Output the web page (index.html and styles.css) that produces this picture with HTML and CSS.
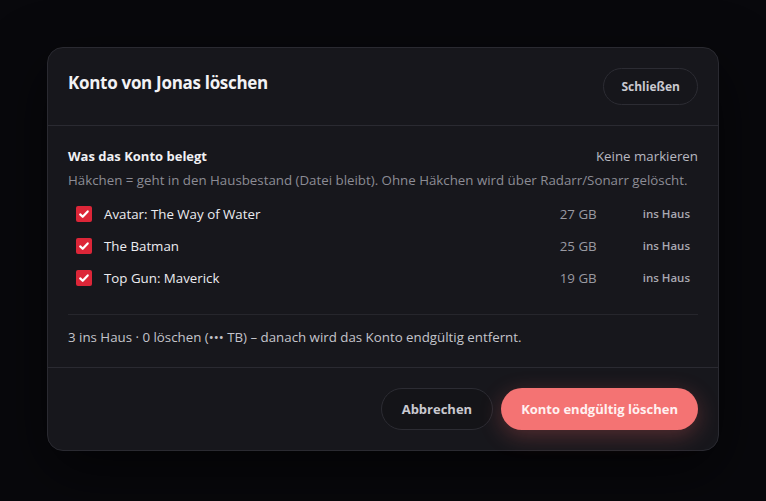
FILE: index.html
```html
<!DOCTYPE html>
<html lang="de">
<head>
<meta charset="utf-8">
<title>Konto löschen</title>
<link rel="stylesheet" href="styles.css">
</head>
<body>
<div class="backdrop">
  <div class="modal">
    <div class="modal-header">
      <h2 class="modal-title">Konto von Jonas löschen</h2>
      <button class="btn btn-ghost btn-sm">Schließen</button>
    </div>
    <div class="modal-body">
      <div class="section-head">
        <span class="section-title">Was das Konto belegt</span>
        <span class="link">Keine markieren</span>
      </div>
      <p class="hint">Häkchen = geht in den Hausbestand (Datei bleibt). Ohne Häkchen wird über Radarr/Sonarr gelöscht.</p>
      <ul class="items">
        <li class="item">
          <span class="check"><svg viewBox="0 0 16 16" width="16" height="16"><path d="M4.2 8.4l2.5 2.4 5-5.4" fill="none" stroke="#fff" stroke-width="2.2" stroke-linecap="round" stroke-linejoin="round"/></svg></span>
          <span class="item-name">Avatar: The Way of Water</span>
          <span class="item-size">27 GB</span>
          <span class="item-status">ins Haus</span>
        </li>
        <li class="item">
          <span class="check"><svg viewBox="0 0 16 16" width="16" height="16"><path d="M4.2 8.4l2.5 2.4 5-5.4" fill="none" stroke="#fff" stroke-width="2.2" stroke-linecap="round" stroke-linejoin="round"/></svg></span>
          <span class="item-name">The Batman</span>
          <span class="item-size">25 GB</span>
          <span class="item-status">ins Haus</span>
        </li>
        <li class="item">
          <span class="check"><svg viewBox="0 0 16 16" width="16" height="16"><path d="M4.2 8.4l2.5 2.4 5-5.4" fill="none" stroke="#fff" stroke-width="2.2" stroke-linecap="round" stroke-linejoin="round"/></svg></span>
          <span class="item-name">Top Gun: Maverick</span>
          <span class="item-size">19 GB</span>
          <span class="item-status">ins Haus</span>
        </li>
      </ul>
      <div class="summary">3 ins Haus · 0 löschen (••• TB) – danach wird das Konto endgültig entfernt.</div>
    </div>
    <div class="modal-footer">
      <button class="btn btn-ghost">Abbrechen</button>
      <button class="btn btn-danger">Konto endgültig löschen</button>
    </div>
  </div>
</div>
</body>
</html>
```
FILE: styles.css
```css
* { box-sizing: border-box; }
html, body { margin: 0; padding: 0; }
body {
  background: #08080c;
  font-family: "Open Sans", "Noto Sans", sans-serif;
  color: #e6e6ea;
}
.backdrop {
  min-height: 501px;
  display: flex;
  align-items: center;
  justify-content: center;
  padding-bottom: 4px;
}
.modal {
  width: 672px;
  background: #17171c;
  border: 1px solid #2a2a31;
  border-radius: 16px;
  box-shadow: 0 20px 60px rgba(0,0,0,0.6);
}
.modal-header {
  display: flex;
  justify-content: space-between;
  align-items: flex-start;
  padding: 20px 20px 20px 20px;
  border-bottom: 1px solid #2a2a31;
}
.modal-title {
  margin: 3px 0 0;
  font-size: 17px;
  font-weight: 700;
  line-height: 24px;
  color: #f2f2f5;
  letter-spacing: -0.3px;
}
.btn {
  font-family: inherit;
  font-weight: 700;
  font-size: 13px;
  border-radius: 999px;
  cursor: pointer;
  display: inline-flex;
  align-items: center;
  justify-content: center;
}
.btn-ghost {
  background: #141418;
  border: 1px solid #2c2c33;
  color: #c9c9d0;
  height: 42px;
  padding: 0 20px;
}
.btn-sm {
  height: 37px;
  font-size: 12px;
  padding: 0 17px;
  background: #16161b;
}
.btn-danger {
  background: #f47373;
  border: none;
  color: #fff1f1;
  height: 42px;
  padding: 0 20px;
  box-shadow: 0 6px 22px rgba(244,100,100,0.28);
}
.modal-body {
  padding: 20px 20px 20px;
  border-bottom: 1px solid #2a2a31;
}
.section-head {
  display: flex;
  justify-content: space-between;
  align-items: center;
  line-height: 20px;
}
.section-title {
  font-size: 13px;
  font-weight: 700;
  color: #f0f0f3;
}
.link {
  font-size: 13.3px;
  color: #b8b8c0;
}
.hint {
  margin: 4px 0 0;
  font-size: 13.3px;
  line-height: 20px;
  color: #8c8c95;
}
.items {
  list-style: none;
  margin: 8px 0 0;
  padding: 0;
}
.item {
  display: flex;
  align-items: center;
  height: 32px;
  padding: 0 8px;
}
.check {
  width: 16px;
  height: 16px;
  border-radius: 2px;
  background: #dc2638;
  display: flex;
  margin-right: 12px;
}
.item-name {
  flex: 1;
  font-size: 13.3px;
  color: #ececf0;
}
.item-size {
  font-size: 13.3px;
  color: #9a9aa2;
}
.item-status {
  margin-left: 46px;
  font-size: 11.5px;
  font-weight: 600;
  color: #a9a9b1;
}
.summary {
  margin-top: 20px;
  padding-top: 12px;
  border-top: 1px solid #26262c;
  font-size: 13.3px;
  line-height: 20px;
  color: #c4c4cb;
}
.modal-footer {
  display: flex;
  justify-content: flex-end;
  gap: 8px;
  padding: 20px;
}
```
